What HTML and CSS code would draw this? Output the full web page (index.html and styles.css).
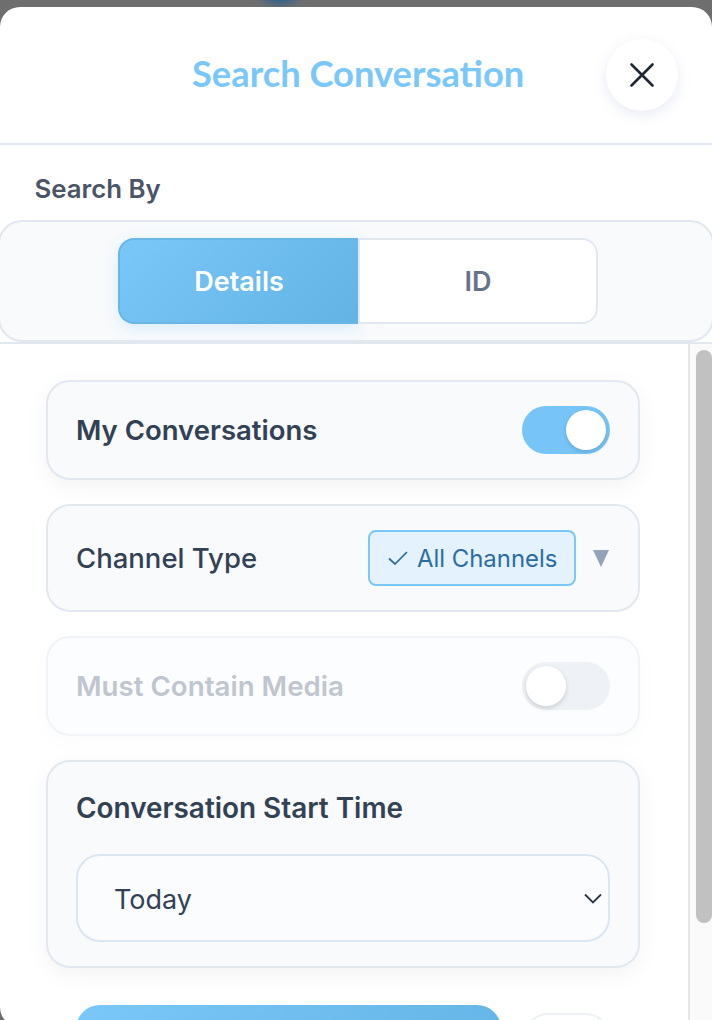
FILE: index.html
```html
<!DOCTYPE html>
<html lang="en">
<head>
<meta charset="utf-8">
<title>Search Conversation</title>
<link rel="stylesheet" href="styles.css">
</head>
<body>
<div class="backdrop-blob"></div>
<div class="modal">
  <header class="modal-header">
    <h1 class="modal-title">Search Conversation</h1>
    <button class="close-btn" aria-label="Close">
      <svg width="26" height="26" viewBox="0 0 26 26"><path d="M2.5 2.5 23.5 23.5M23.5 2.5 2.5 23.5" fill="none" stroke="#1f2933" stroke-width="2.6" stroke-linecap="round"/></svg>
    </button>
  </header>
  <div class="search-by">Search By</div>
  <div class="tab-panel">
    <div class="tabs">
      <div class="tab tab-active">Details</div>
      <div class="tab tab-idle">ID</div>
    </div>
  </div>
  <div class="scroll-wrap">
    <div class="scroll-body">
      <section class="card card-row card-shadow">
        <span class="card-label">My Conversations</span>
        <span class="toggle toggle-on"><span class="knob"></span></span>
      </section>
      <section class="card card-row card-channel">
        <span class="card-label label-regular">Channel Type</span>
        <span class="channel-pick">
          <span class="chip">
            <svg width="20" height="16" viewBox="0 0 20 16"><path d="M1 8.500 7 14 19 2" fill="none" stroke="#2b6ca3" stroke-width="1.700"/></svg>
            All Channels
          </span>
          <svg class="caret" width="16" height="17" viewBox="0 0 16 17"><path d="M0 0H16L8 17Z" fill="#94a3b8"/></svg>
        </span>
      </section>
      <section class="card card-row card-disabled">
        <span class="card-label label-wide">Must Contain Media</span>
        <span class="toggle toggle-off"><span class="knob"></span></span>
      </section>
      <section class="card card-time card-shadow">
        <div class="card-label label-time">Conversation Start Time</div>
        <div class="select">
          <span>Today</span>
          <svg width="18" height="12" viewBox="0 0 18 12"><path d="M1 1.500 9 9.500 17 1.500" fill="none" stroke="#2d3748" stroke-width="1.800"/></svg>
        </div>
      </section>
      <div class="actions">
        <div class="btn-primary"></div>
        <div class="btn-secondary"></div>
      </div>
    </div>
    <div class="scroll-track"><div class="scroll-thumb"></div></div>
  </div>
</div>
</body>
</html>
```
FILE: styles.css
```css
* { box-sizing: border-box; }
html, body { margin: 0; height: 1020px; overflow: hidden; }
body {
  background: #6e6e6f;
  padding-top: 7px;
  font-family: Inter, "Liberation Sans", sans-serif;
  position: relative;
}
.backdrop-blob {
  position: absolute;
  left: 262px;
  top: -16px;
  width: 36px;
  height: 20px;
  border-radius: 50%;
  background: #2f6290;
  filter: blur(4px);
}
.modal {
  position: relative;
  height: 1020px;
  background: #fff;
  border-radius: 20px 20px 0 20px;
  overflow: hidden;
}
.modal-header {
  height: 138px;
  border-bottom: 2px solid #e2e8f0;
  display: flex;
  align-items: center;
  justify-content: flex-end;
  padding: 0 34px 0 0;
  position: relative;
}
.modal-title {
  position: absolute;
  left: 192px;
  top: 42px;
  margin: 0;
  font: 700 36.3px/48px Lato, sans-serif;
  color: #7ac7f9;
  white-space: nowrap;
}
.close-btn {
  width: 72px;
  height: 72px;
  border: 0;
  padding: 0;
  border-radius: 50%;
  background: #fff;
  box-shadow: 0 4px 14px rgba(120, 130, 190, .16);
  display: flex;
  align-items: center;
  justify-content: center;
}
.search-by {
  padding: 29px 0 0 34.500px;
  height: 75px;
  font-size: 25.800px;
  line-height: 30px;
  font-weight: 600;
  color: #4a5568;
}
.tab-panel {
  margin: 0 -2px;
  height: 122px;
  border: 2px solid #e2e8f0;
  border-radius: 24px;
  background: #f8fafc;
  padding: 16px 0 0 118px;
}
.tabs { display: flex; height: 86px; width: 480px; }
.tab {
  width: 240px;
  display: flex;
  align-items: center;
  justify-content: center;
  font-size: 27px;
  font-weight: 600;
}
.tab-active {
  color: #fff;
  background: linear-gradient(135deg, #7ac7f9, #63b3e5);
  border: 2px solid #68b5e6;
  border-right: 0;
  border-radius: 16px 0 0 16px;
  box-shadow: 0 4px 14px rgba(122, 199, 249, .25);
}
.tab-idle {
  color: #64748b;
  background: #fff;
  border: 2px solid #e2e8f0;
  border-radius: 0 16px 16px 0;
}
.scroll-wrap {
  display: flex;
  height: 690px;
  border-top: 2px solid #e2e8f0;
}
.scroll-body {
  width: 690px;
  border-right: 2px solid #e6e6e6;
  padding: 36px 48px 0 46px;
  display: flex;
  flex-direction: column;
  gap: 24px;
  overflow: hidden;
  flex: none;
}
.card {
  flex: none;
  border: 2px solid #e2e8f0;
  border-radius: 24px;
  background: #f8fafc;
  padding: 0 28px;
}
.card-shadow { box-shadow: 0 6px 24px rgba(0, 0, 0, .05); }
.card-row {
  display: flex;
  align-items: center;
  justify-content: space-between;
  height: 100px;
}
.card-channel { height: 108px; }
.card-disabled {
  background: #fcfdfe;
  border-color: #f0f3f7;
  box-shadow: 0 6px 24px rgba(0, 0, 0, .02);
}
.card-disabled .card-label { color: #c0c6cf; }
.card-label {
  font-size: 27.500px;
  line-height: 36px;
  font-weight: 600;
  color: #334155;
}
.label-regular { font-weight: 500; }
.label-wide { font-size: 27.700px; }
.label-time { font-size: 27.900px; line-height: 34px; }
.toggle {
  width: 88px;
  height: 48px;
  border-radius: 24px;
  padding: 4px;
  display: flex;
}
.toggle-on { background: #77c5f8; justify-content: flex-end; }
.toggle-off { background: #eef1f5; }
.knob {
  width: 40px;
  height: 40px;
  border-radius: 50%;
  background: #fff;
  box-shadow: 0 2px 5px rgba(0, 0, 0, .15);
}
.channel-pick { display: flex; align-items: center; gap: 17px; margin-right: 1px; }
.chip {
  width: 208px;
  height: 56px;
  border: 2px solid #7ac7f9;
  border-radius: 8px;
  background: #e3f2fd;
  color: #2b6ca3;
  font-size: 23.900px;
  display: flex;
  align-items: center;
  gap: 9px;
  padding-left: 18px;
}
.card-time { height: 208px; padding: 29px 28px 0; }
.select {
  margin-top: 29px;
  height: 88px;
  border: 2px solid #dbe6f3;
  border-radius: 24px;
  background: #fbfcfe;
  display: flex;
  align-items: center;
  justify-content: space-between;
  padding: 2px 6px 0 36px;
  font-size: 27px;
  color: #334155;
}
.actions {
  flex: none;
  margin: 13px 30px 0;
  display: flex;
  gap: 23px;
  align-items: flex-start;
}
.btn-primary {
  width: 425px;
  height: 88px;
  border-radius: 24px;
  background: linear-gradient(135deg, #7ac7f9, #63b3e5);
}
.btn-secondary {
  width: 86px;
  height: 72px;
  margin-top: 8px;
  border: 2px solid #eef1f5;
  border-radius: 24px;
  background: #fff;
}
.scroll-track {
  flex: none;
  width: 22px;
  background: #fafafa;
  padding: 6px 0 0 6px;
}
.scroll-thumb {
  width: 16px;
  height: 573px;
  border-radius: 8px;
  background: #c1c1c1;
}
```
